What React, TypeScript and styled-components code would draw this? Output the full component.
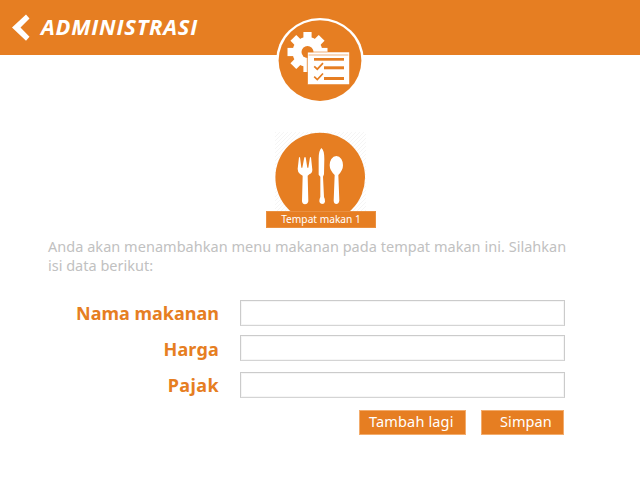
import React from "react";
import styled, { createGlobalStyle } from "styled-components";

const ORANGE = "#e67e22";

const GlobalStyle = createGlobalStyle`
  * { box-sizing: border-box; }
  body { margin: 0; background: #fff; overflow: hidden; }
`;

const Screen = styled.main`
  width: 640px;
  height: 480px;
  background: #fff;
  font-family: "Noto Sans", "Open Sans", sans-serif;
  display: flex;
  flex-direction: column;
`;

const Header = styled.header`
  position: relative;
  height: 55px;
  flex: none;
  display: flex;
  align-items: center;
  gap: 11px;
  padding-left: 12px;
  background: ${ORANGE};
`;

const BackIcon = styled.svg`
  width: 18px;
  height: 28px;
  flex: none;
`;

const Title = styled.h1`
  margin: 0 0 3px;
  color: #fff;
  font-family: "Open Sans", "Noto Sans", sans-serif;
  font-size: 22px;
  line-height: 30px;
  font-weight: 700;
  font-style: italic;
  letter-spacing: 0.75px;
`;

const Badge = styled.svg`
  position: absolute;
  left: 275px;
  top: 16px;
  width: 90px;
  height: 90px;
`;

const Place = styled.section`
  margin-top: 77px;
  height: 96px;
  flex: none;
  display: flex;
  flex-direction: column;
  align-items: center;
  padding-left: 2px;
`;

const PlaceIcon = styled.svg`
  width: 92px;
  height: 79px;
  flex: none;
  display: block;
`;

const PlaceLabel = styled.div`
  width: 110px;
  height: 17px;
  flex: none;
  background: ${ORANGE};
  border: 1px solid #ea9040;
  color: #fff;
  font-size: 10.2px;
  line-height: 15px;
  text-align: center;
`;

const Intro = styled.p`
  margin: 9px 0 0 48px;
  height: 38px;
  color: #c1c1c1;
  font-size: 14.5px;
  line-height: 19px;
  white-space: nowrap;
`;

const IntroLine = styled.span<{ $spacing: number }>`
  display: block;
  letter-spacing: ${(p) => p.$spacing}px;
`;

const Form = styled.form`
  margin: 25px 75px 0 48px;
  display: grid;
  grid-template-columns: 171px 325px;
  grid-template-rows: 26px 28px 26px;
  column-gap: 21px;
  row-gap: 9px;
`;

const Label = styled.label<{ $spacing: number }>`
  display: flex;
  align-items: center;
  justify-content: flex-end;
  color: ${ORANGE};
  font-size: 18px;
  font-weight: 700;
  line-height: 26px;
  white-space: nowrap;
  letter-spacing: ${(p) => p.$spacing}px;
`;

const Field = styled.input`
  width: 325px;
  height: 26px;
  padding: 2px 6px;
  border: 1px solid #cbcbcb;
  border-bottom-color: #d4d4d4;
  box-shadow: inset 0 0 0 1px #f6f6f6;
  border-radius: 0;
  background: #fff;
  outline: none;
  font: inherit;
`;

const Actions = styled.div`
  margin: 12px 76px 0 0;
  display: flex;
  justify-content: flex-end;
  gap: 15px;
`;

const Button = styled.button<{ $width: number; $indent: number; $spacing: number }>`
  width: ${(p) => p.$width}px;
  height: 25px;
  padding: 0 0 2px ${(p) => p.$indent}px;
  border: 1px solid #f3ac6c;
  background: ${ORANGE};
  color: #fff;
  font: 14.5px/21px "Noto Sans", "Open Sans", sans-serif;
  letter-spacing: ${(p) => p.$spacing}px;
  text-align: left;
  white-space: nowrap;
`;

const TEETH = [0, 45, 90, 135, 180, 225, 270, 315];

const FIELDS = [
  { id: "nama", label: "Nama makanan", spacing: 0 },
  { id: "harga", label: "Harga", spacing: 0.2 },
  { id: "pajak", label: "Pajak", spacing: 0.4 },
];

function AdminBadge() {
  return (
    <Badge viewBox="275 16 90 90">
      <ellipse cx="320" cy="60.7" rx="43.9" ry="42.8" fill="#fff" />
      <ellipse cx="320" cy="60.6" rx="41.4" ry="40.3" fill={ORANGE} />
      <g transform="translate(307.5 52)" fill="#fff">
        <circle r="15" />
        {TEETH.map((a) => (
          <path key={a} d="M-4.1-20H4.1V-12H-4.1Z" transform={`rotate(${a})`} />
        ))}
        <circle r="6" fill={ORANGE} />
      </g>
      <path d="M307.6 52.2H349.2V84.2H307.6Z" fill="#fff" />
      <path d="M308.6 55H348.4" stroke={ORANGE} strokeOpacity="0.75" strokeWidth="0.8" />
      <path d="M307.3 52V84.2" stroke={ORANGE} strokeWidth="0.8" />
      <path d="M307.3 52H327.5" stroke={ORANGE} strokeWidth="0.6" />
      <g fill={ORANGE}>
        <path d="M314 58H344V60.7H314Z" />
        <path d="M324 66.3H344V69.3H324Z" />
        <path d="M324 77H344V80H324Z" />
      </g>
      <g fill="none" stroke={ORANGE} strokeWidth="1.7">
        <path d="M314.2 66.3L317.3 69.2L323 63.2" />
        <path d="M314.2 76.6L317.3 79.5L323 73.5" />
      </g>
    </Badge>
  );
}

function CutleryIcon() {
  return (
    <PlaceIcon viewBox="275 132 92 79">
      <defs>
        <pattern id="hatch" width="4" height="4" patternUnits="userSpaceOnUse">
          <path d="M-1 1L1-1M0 4L4 0M3 5L5 3" stroke="#f2f2f2" strokeWidth="0.8" />
        </pattern>
      </defs>
      <path d="M275 132H366V211H275Z" fill="url(#hatch)" />
      <circle cx="320.2" cy="177.5" r="44.8" fill={ORANGE} />
      <g transform="translate(290 145) scale(.33333)" fill="#fff">
        <path d="M27 37H30L34 68H37L43 37H47L52 68H55L60 37H63L67 74Q67 84 59 87L53 92L55 169Q53 178 45 178Q37 178 36 169L38 92L30 87Q23 82 23 72Z" />
        <path d="M94 9Q103 15 103 42L102 88L99 95L102 156Q106 163 105 170Q104 177 96 177Q88 176 88 169Q88 162 91 156L91 95L86 89L86 41Q86 17 94 9Z" />
        <path d="M139 33Q148 33 154 42Q159 50 159 61Q159 76 145 90L148 167Q146 177 139 177Q132 177 131 167L134 90Q119 76 119 61Q119 50 124 42Q130 33 139 33Z" />
      </g>
    </PlaceIcon>
  );
}

export default function App() {
  return (
    <Screen>
      <GlobalStyle />
      <Header>
        <BackIcon viewBox="0 0 18 28">
          <path d="M14 .5L17.5 4.5L8.5 13.5L17.5 22.7L14 26.7L0 13.5Z" fill="#fff" />
        </BackIcon>
        <Title>ADMINISTRASI</Title>
        <AdminBadge />
      </Header>
      <Place>
        <CutleryIcon />
        <PlaceLabel>Tempat makan 1</PlaceLabel>
      </Place>
      <Intro>
        <IntroLine $spacing={0.03}>
          Anda akan menambahkan menu makanan pada tempat makan ini. Silahkan
        </IntroLine>
        <IntroLine $spacing={0}>isi data berikut:</IntroLine>
      </Intro>
      <Form>
        {FIELDS.map((f) => (
          <React.Fragment key={f.id}>
            <Label htmlFor={f.id} $spacing={f.spacing}>
              {f.label}
            </Label>
            <Field id={f.id} />
          </React.Fragment>
        ))}
      </Form>
      <Actions>
        <Button type="button" $width={107} $indent={9} $spacing={0.15}>
          Tambah lagi
        </Button>
        <Button type="button" $width={83} $indent={18} $spacing={0.1}>
          Simpan
        </Button>
      </Actions>
    </Screen>
  );
}
